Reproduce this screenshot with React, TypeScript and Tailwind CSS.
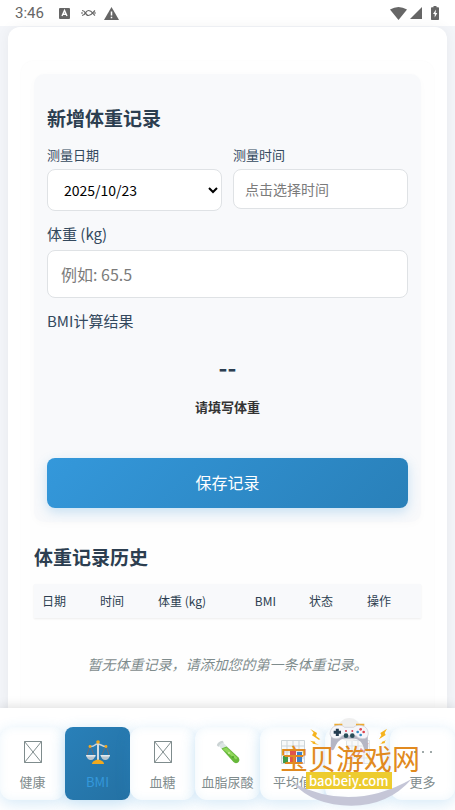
import type { ReactNode } from "react";

const columns = [
  { title: "日期", width: "w-[15%]" },
  { title: "时间", width: "w-[15%]" },
  { title: "体重 (kg)", width: "w-[25%]" },
  { title: "BMI", width: "w-[14%]" },
  { title: "状态", width: "w-[15%]" },
  { title: "操作", width: "w-[16%]" },
];

export default function App() {
  return (
    <div className="relative flex min-h-screen flex-col overflow-hidden bg-[#f3f5f9] font-['Noto_Sans_CJK_SC',sans-serif] text-[#2c3e50]">
      <StatusBar />
      <main className="mx-2 mt-px flex flex-1 flex-col rounded-t-xl bg-white px-[13px] pt-[34px] shadow-[0_0_14px_rgba(0,0,0,0.05)]">
        <div className="flex-1 rounded-t-xl bg-[#fefefe] px-[13px] pt-[13px] shadow-[0_0_2px_rgba(0,0,0,0.03)]">
          <WeightForm />
          <History />
        </div>
      </main>
      <BottomNav />
    </div>
  );
}

function StatusBar() {
  return (
    <header className="flex h-[26px] items-center bg-white pl-[15px] pr-4 text-[#666]">
      <span className="font-[Roboto,sans-serif] text-[15px] leading-5">3:46</span>
      <svg className="ml-[15px] size-[11px]" viewBox="0 0 11 11">
        <rect width="11" height="11" rx="1" fill="currentColor" />
        <path d="M3 8 5.5 2.5 8 8M4 6.3h3" fill="none" stroke="#fff" strokeWidth="1.4" />
      </svg>
      <svg className="ml-[11px] h-2 w-[15px]" viewBox="0 0 15 8" fill="none" stroke="currentColor" strokeWidth="1.2">
        <path d="M0 4h2M1 1.500C5 1.500 4 6.500 7.500 6.500S12 3 14 1.500M1 6.500C5 6.500 4 1.500 7.500 1.500S12 5 14 6.500M13 4h2" />
      </svg>
      <svg className="ml-2 h-[13px] w-[15px]" viewBox="0 0 15 13">
        <path d="M7.500 0 15 13H0Z" fill="currentColor" />
        <path d="M7.500 4.500v4M7.500 9.700v1.500" stroke="#fff" strokeWidth="1.500" />
      </svg>
      <svg className="ml-auto h-[13px] w-[17px]" viewBox="0 0 17 13" fill="currentColor">
        <path d="M0 2.500Q8.500-2.500 17 2.500L8.500 13Z" />
      </svg>
      <svg className="ml-[3px] size-3" viewBox="0 0 12 12" fill="currentColor">
        <path d="M12 0v12H0Z" />
      </svg>
      <svg className="ml-[9px] h-[14px] w-2" viewBox="0 0 8 14">
        <path d="M2.500 0h3v1.300H7.200q.8 0 .8.800V13.200q0 .8-.8.800H.8Q0 14 0 13.200V2.100q0-.8.800-.8h1.700Z" fill="currentColor" />
        <path d="M5 3.500 2 8h1.700v3.500L6.300 7H4.600Z" fill="#fff" />
      </svg>
    </header>
  );
}

function WeightForm() {
  return (
    <form className="rounded-[10px] bg-[#f8f9fb] px-[13px] pb-[14px] pt-[30px] shadow-[0_2px_8px_rgba(0,0,0,0.02)]">
      <h2 className="mb-[13px] text-[19px] font-bold leading-7">新增体重记录</h2>
      <div className="grid grid-cols-2 items-start gap-[11px]">
        <div>
          <label htmlFor="date" className="mb-1 block text-[13px] leading-5 text-[#34495e]">
            测量日期
          </label>
          <select
            id="date"
            className="block h-[42px] w-full appearance-auto rounded-lg border border-[#dfe2e5] bg-white pl-3 text-[14px] text-black"
          >
            <option>2025/10/23</option>
          </select>
        </div>
        <div>
          <label htmlFor="time" className="mb-1 block text-[13px] leading-5 text-[#34495e]">
            测量时间
          </label>
          <input
            id="time"
            type="text"
            readOnly
            placeholder="点击选择时间"
            className="block h-10 w-full rounded-lg border border-[#dfe2e5] bg-white px-[11px] text-[14px] placeholder:text-[#7b7b7b]"
          />
        </div>
      </div>
      <label htmlFor="weight" className="mb-[5px] mt-3 block text-[15px] leading-[22px] text-[#34495e]">
        体重 (kg)
      </label>
      <input
        id="weight"
        type="text"
        inputMode="decimal"
        placeholder="例如: 65.5"
        className="block h-12 w-full rounded-lg border border-[#dfe2e5] bg-white px-[13px] text-[16px] placeholder:text-[#7b7b7b]"
      />
      <p className="mt-3 text-[15px] leading-[22px] text-[#34495e]">BMI计算结果</p>
      <output htmlFor="weight" className="mt-[19px] block text-center font-bold">
        <span className="block text-[24px] leading-8">--</span>
        <span className="mt-[14px] block text-[13px] leading-5 text-[#333]">请填写体重</span>
      </output>
      <button
        type="button"
        className="mt-[41px] h-[50px] w-full rounded-lg bg-linear-135 from-[#3498db] to-[#2980b9] pb-0.5 text-[16px] text-white shadow-[0_4px_12px_rgba(52,152,219,0.25)]"
      >
        保存记录
      </button>
    </form>
  );
}

function History() {
  return (
    <section className="pb-8">
      <h2 className="mt-[21px] text-[19px] font-bold leading-7">体重记录历史</h2>
      <table className="mt-[13px] w-full table-fixed text-[12px]">
        <thead className="bg-[#f8f9fb] shadow-[0_1px_2px_rgba(0,0,0,0.07)]">
          <tr className="h-[34px]">
            {columns.map((col) => (
              <th key={col.title} className={`${col.width} px-2 text-left font-normal`}>
                {col.title}
              </th>
            ))}
          </tr>
        </thead>
        <tbody>
          <tr>
            <td colSpan={6} className="pt-9 text-center text-[14px] italic leading-5 text-[#7f8c8d]">
              暂无体重记录，请添加您的第一条体重记录。
            </td>
          </tr>
        </tbody>
      </table>
    </section>
  );
}

function BottomNav() {
  return (
    <nav className="relative flex bg-white pb-[10px] pt-[19px] shadow-[0_-2px_10px_rgba(0,0,0,0.12)]">
      <NavItem label="健康" icon={<MissingGlyph />} />
      <NavItem label="BMI" icon={<Scales />} active />
      <NavItem label="血糖" icon={<MissingGlyph />} />
      <NavItem label="血脂尿酸" icon={<TestTube />} />
      <NavItem label="平均值" icon={<BarChart />} />
      <NavItem label="" icon={<LineChart />} />
      <NavItem label="更多" icon={<Dots />} />
      <Watermark />
    </nav>
  );
}

interface NavItemProps {
  label: string;
  icon: ReactNode;
  active?: boolean;
}

function NavItem({ label, icon, active }: NavItemProps) {
  return (
    <button
      type="button"
      className={`flex h-[73px] min-w-0 flex-1 flex-col items-center pt-[13px] text-[13px] ${
        active
          ? "rounded-lg bg-linear-135 from-[#2980b9] to-[#2471a3] text-[#3498db] shadow-[0_4px_15px_rgba(52,152,219,0.3)]"
          : "rounded-xl bg-white text-[#7f8c8d] shadow-[0_4px_15px_rgba(52,152,219,0.2),inset_0_0_10px_rgba(52,152,219,0.08)]"
      }`}
    >
      <span className="flex h-6 items-center">{icon}</span>
      <span className="mt-2 whitespace-nowrap leading-5">{label}</span>
    </button>
  );
}

function MissingGlyph() {
  return (
    <svg className="h-[22px] w-[18px]" viewBox="0 0 18 22" fill="none" stroke="#7f8c8d">
      <path d="M.5.5h17v21H.5ZM.5.5l17 21M17.500.5.5 21.500" />
    </svg>
  );
}

function Scales() {
  return (
    <svg className="size-6" viewBox="0 0 24 24">
      <path d="M4 5 1 15M4 5l4 10M20 5l-4 10M20 5l3 10" stroke="#7b6a68" strokeWidth=".8" />
      <path d="M3.500 6.500Q7 7 9 5t6 0 5.500 1.500" fill="none" stroke="#c9d3da" strokeWidth="1.500" />
      <path d="M12 3v17" stroke="#d3dbe0" strokeWidth="2" />
      <path d="M0 15h9.500q-1 5-4.700 5T0 15ZM14.500 15H24q-1 5-4.700 5T14.500 15Z" fill="#b8c5ce" />
      <path d="M0 15h9.500v1.500H.5ZM14.500 15H24l-.5 1.500h-8.500Z" fill="#e4eaee" />
      <path d="M6 24q0-3.500 6-4.500 6 1 6 4.500Z" fill="#f2a91d" />
      <circle cx="12" cy="2" r="1.800" fill="#f2a91d" />
      <circle cx="4" cy="6.500" r="1.400" fill="#f2a91d" />
      <circle cx="20" cy="6.500" r="1.400" fill="#f2a91d" />
    </svg>
  );
}

function TestTube() {
  return (
    <svg className="size-6" viewBox="0 0 24 24">
      <path d="M2 5 6 1.500 22.500 17.500q2 3-.5 5-2.500 1.500-4.500-.5Z" fill="#dce5e4" />
      <path d="m5.500 8.500 5-2 12 11q2 3-.5 5-2.500 1.500-4.500-.5Z" fill="#67b83a" />
      <path d="m6.500 9 4-1.500 11 10.500-1.500 1.500Z" fill="#8fd75b" />
      <path d="M.8 5.300Q2 1.500 6.500.8L8 2.500Q3.500 3 2.500 7Z" fill="#cbd3d4" />
      <circle cx="13" cy="13" r="1" fill="#c5ed97" />
      <circle cx="17" cy="17" r="1" fill="#4da12d" />
    </svg>
  );
}

function BarChart() {
  return (
    <svg className="size-6" viewBox="0 0 24 24">
      <path d="M.5.5h23v23H.5ZM.5 6h23M.5 12h23M.5 18h23M6 .5v23M12 .5v23M18 .5v23" fill="#f7f9fa" stroke="#cdd5d9" />
      <path d="M2 16h5v7H2Z" fill="#3f9b4b" />
      <path d="M9 10h6v13H9Z" fill="#e1544d" />
      <path d="M16 12h5v11h-5Z" fill="#3d80ca" />
    </svg>
  );
}

function LineChart() {
  return (
    <svg className="size-6" viewBox="0 0 24 24">
      <path d="M.5.5h23v23H.5ZM.5 6h23M.5 12h23M.5 18h23M6 .5v23M12 .5v23M18 .5v23" fill="#f8fafb" stroke="#dfe4e7" />
      <path d="m2 19 5-5 4 3 4-8 3 3 4-9" fill="none" stroke="#e59a98" strokeWidth="1.500" />
    </svg>
  );
}

function Dots() {
  return (
    <svg className="size-6" viewBox="0 0 24 24" fill="#7f8c8d">
      <circle cx="4" cy="12" r="1" />
      <circle cx="12" cy="12" r="1" />
      <circle cx="20" cy="12" r="1" />
    </svg>
  );
}

function Watermark() {
  return (
    <div className="pointer-events-none absolute right-[33px] top-[7px] w-[142px]">
      <svg className="h-[94px] w-full" viewBox="0 0 426 282">
        <circle cx="208" cy="44" r="35" fill="#efefef" />
        <g fill="#f5b31d">
          <path d="m91 42 20 12-3 9 13 10-5 1-20-13 5-8Z" />
          <path d="m90 77 16 3-1 4 12 5-19-3v-3Z" />
          <path d="m321 41-20 13 3 7-7 12 20-13-3-6Z" />
          <path d="m318 76-13 5 1 3-7 4 16-4-1-4Z" />
        </g>
        <path d="M166 32v-3h18v3M231 32v-3h19v3" fill="none" stroke="#edaa32" strokeWidth="6" />
        <path d="m153 50-1 50q2 10 10 3 12-31 29-32h34q19 2 28 31 8 9 11-1l-1-51Z" fill="#b5b6c4" />
        <path d="M169 32q17-4 25 5h27q9-9 25-5 18 4 19 25-2 15-18 14-12 0-19-9h-42q-6 9-18 9-15 0-18-14 1-21 19-25Z" fill="#f5f5fa" stroke="#c9cad4" strokeWidth="2" />
        <path d="M172 41v22M161 52h22" stroke="#243c51" strokeWidth="9" />
        <circle cx="198" cy="62" r="7" fill="#284c58" />
        <circle cx="217" cy="62" r="7" fill="#284c58" />
        <circle cx="198" cy="48" r="3" fill="#d84356" />
        <circle cx="217" cy="48" r="3" fill="#d84356" />
        <circle cx="242" cy="43" r="4" fill="#e34d55" />
        <circle cx="242" cy="60" r="4" fill="#3b8fc4" />
        <circle cx="233" cy="51" r="4" fill="#3b8fc4" />
        <circle cx="251" cy="51" r="4" fill="#dc414e" />
        <path d="M39 204Q215 294 395 192 325 272 214 272 100 272 39 204Z" fill="#c5c6d7" />
      </svg>
      <span className="absolute left-0 top-[27px] whitespace-nowrap text-[28px] leading-8 text-[#e18a20]">
        宝贝游戏网
      </span>
      <span className="absolute left-[26px] top-[57px] bg-[#edcc2f] px-[3px] text-[13px] font-medium leading-[17px] text-white">
        baobeiy.com
      </span>
    </div>
  );
}
